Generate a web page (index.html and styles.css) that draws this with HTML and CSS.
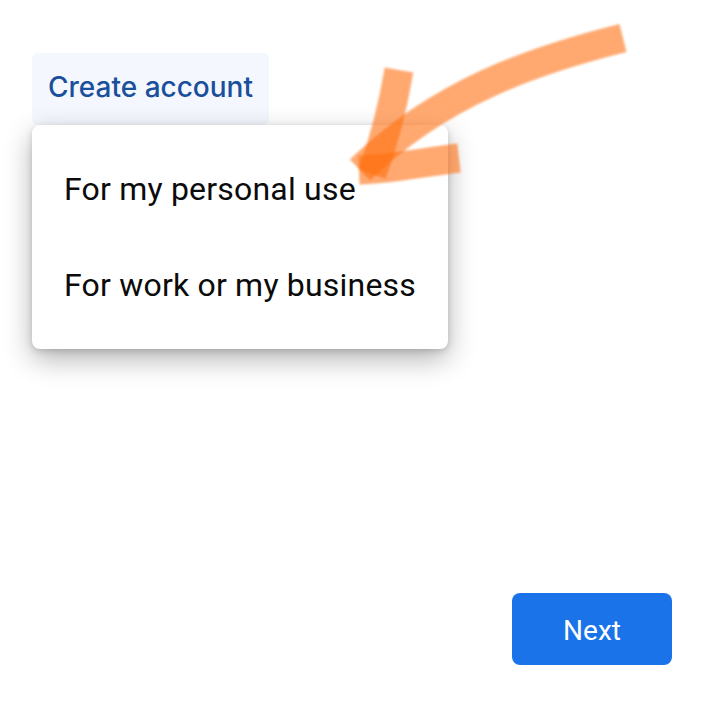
FILE: index.html
```html
<!DOCTYPE html>
<html lang="en">
<head>
    <meta charset="UTF-8">
    <meta name="viewport" content="width=device-width, initial-scale=1.0">
    <title>Create account</title>
    <link rel="stylesheet" href="styles.css">
</head>
<body>
    <div class="page">
        <div class="account">
            <button class="create-btn" type="button">Create account</button>
            <div class="menu">
                <div class="menu-item">For my personal use</div>
                <div class="menu-item">For work or my business</div>
            </div>
        </div>
        <div class="footer">
            <button class="next-btn" type="button">Next</button>
        </div>
    </div>

    <!-- hand drawn arrow on top of the screenshot -->
    <svg class="arrow" width="720" height="708" viewBox="0 0 720 708" fill="none">
        <defs>
            <filter id="soft" filterUnits="userSpaceOnUse" x="0" y="0" width="720" height="708">
                <feGaussianBlur stdDeviation="1.3"/>
            </filter>
        </defs>
        <g class="strokes" filter="url(#soft)">
            <path d="M623 38C535 60 440 92 360 170"/>
            <path d="M399 70C394 100 386 136 372 174"/>
            <path d="M359 170C390 169 425 162 459 158"/>
        </g>
    </svg>
</body>
</html>
```

FILE: styles.css
```css
body {
    margin: 0;
    background-color: #fff;
    font-family: Roboto, "Liberation Sans", sans-serif;
}
.page {
    display: flex;
    flex-direction: column;
    box-sizing: border-box;
    width: 720px;
    height: 708px;
    padding: 53px 48px 43px 32px;
    overflow: hidden;
}
.account {
    display: flex;
    flex-direction: column;
    align-items: flex-start;
}
.create-btn {
    height: 72px;
    width: 237px;
    padding: 0 0 4px;
    border: none;
    border-radius: 6px;
    background-color: #f4f8fe;
    color: #1a4f9c;
    font-family: Inter, sans-serif;
    font-size: 28px;
    font-weight: 500;
}
.menu {
    width: 416px;
    padding: 16px 0;
    background-color: #fff;
    border-radius: 8px;
    box-shadow: 0 10px 28px rgba(0, 0, 0, 0.3), 0 2px 6px rgba(0, 0, 0, 0.15);
    position: relative;
}
.menu-item {
    height: 96px;
    line-height: 96px;
    padding-left: 32px;
    color: #0b0b0b;
    font-size: 32px;
    letter-spacing: 0.2px;
}
.footer {
    margin-top: auto;
    display: flex;
    justify-content: flex-end;
}
.next-btn {
    width: 160px;
    height: 72px;
    padding: 2px 0 0;
    border: none;
    border-radius: 8px;
    background-color: #1a73e8;
    color: #fff;
    font-family: Roboto, sans-serif;
    font-size: 28px;
}
.arrow {
    position: absolute;
    left: 0;
    top: 0;
    pointer-events: none;
}
.strokes path {
    stroke: #ff7010;
    stroke-width: 29;
    stroke-opacity: 0.6;
}
```
